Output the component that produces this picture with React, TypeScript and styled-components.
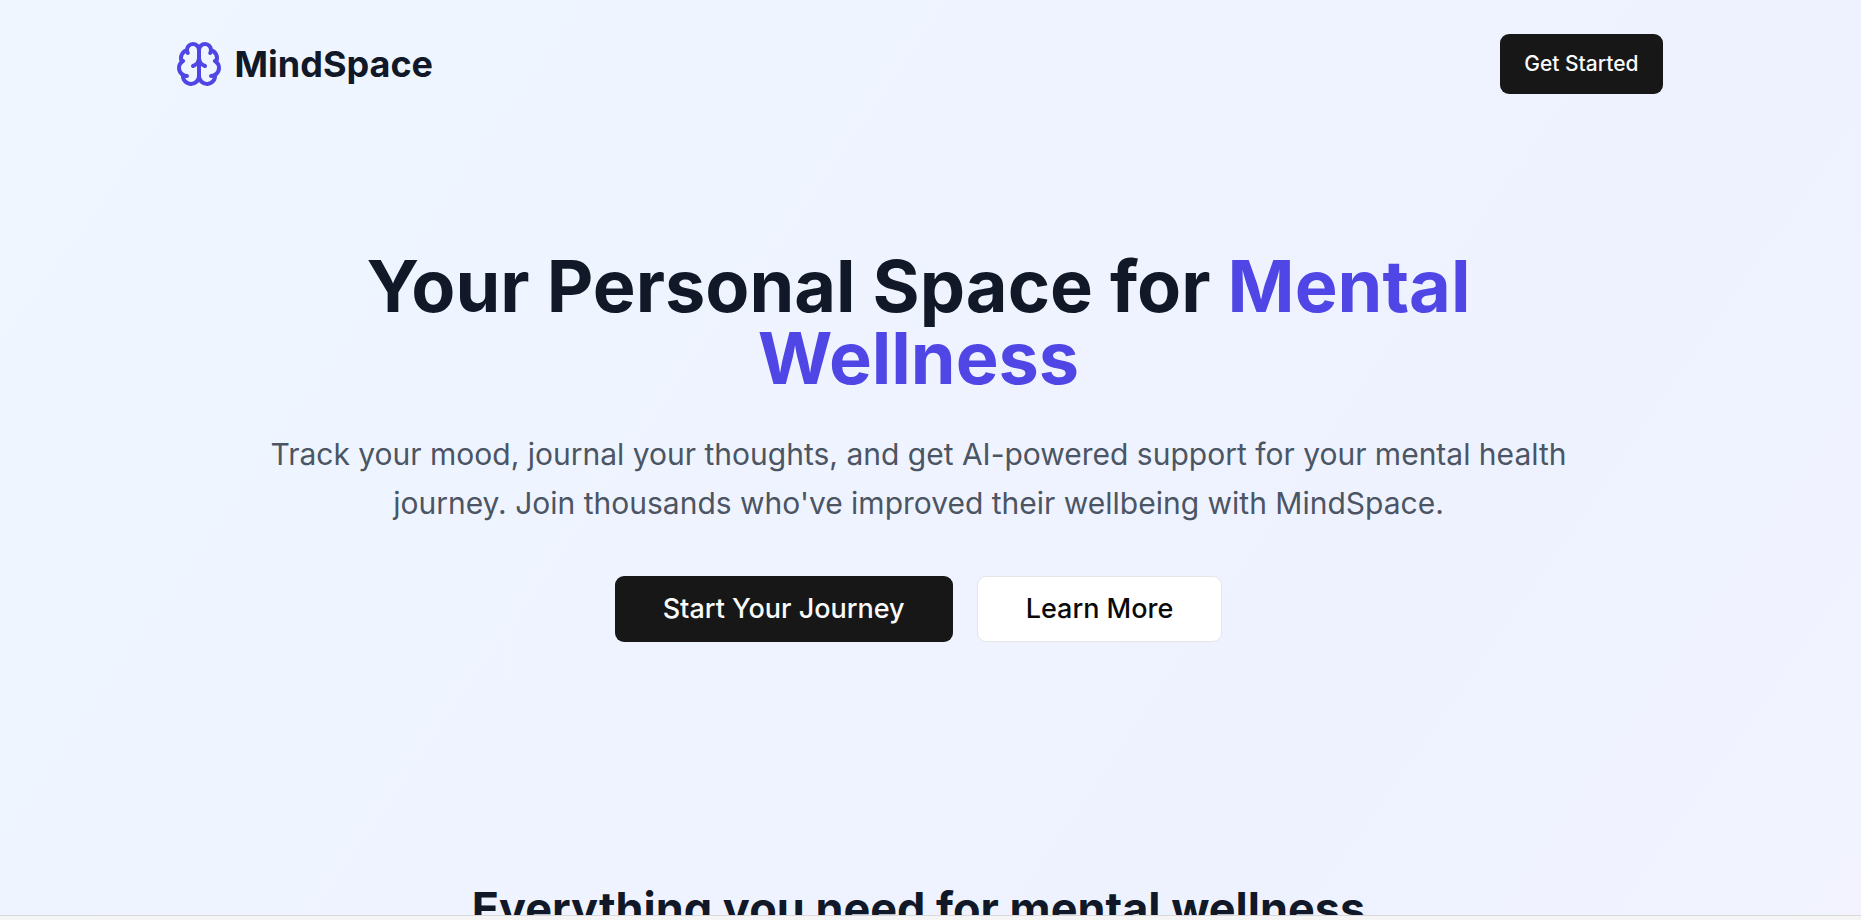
import React from 'react';
import styled, { createGlobalStyle, css } from 'styled-components';

const GlobalStyle = createGlobalStyle`
  *, *::before, *::after { box-sizing: border-box; }
  html, body, #root { height: 100%; }
  body {
    margin: 0;
    overflow: hidden;
    font-family: Inter, "Liberation Sans", sans-serif;
    color: #111827;
  }
  h1, h2, p { margin: 0; }
`;

const Shell = styled.div`
  display: flex;
  flex-direction: column;
  height: 100vh;
`;

const Page = styled.div`
  flex: 1;
  min-height: 0;
  overflow: hidden;
  padding-right: 24px;
  background: linear-gradient(to bottom right, #eff6ff, #eef2ff, #faf5ff) 0 0 / 100% 2700px no-repeat;
`;

const Container = styled.div`
  max-width: 1536px;
  margin: 0 auto;
  padding: 0 24px;
`;

const Header = styled.header`
  display: flex;
  align-items: center;
  justify-content: space-between;
  padding: 34px 0;
`;

const Brand = styled.a`
  display: flex;
  align-items: center;
  gap: 12px;
  color: inherit;
  font-size: 36px;
  line-height: 48px;
  font-weight: 700;
  text-decoration: none;
`;

const BrandIcon = styled.svg`
  width: 48px;
  height: 48px;
  color: #4f46e5;
`;

const Button = styled.button<{ $large?: boolean; $outline?: boolean }>`
  height: 60px;
  padding: 0 24px;
  border: 0;
  border-radius: 9px;
  background: #171717;
  color: #fafafa;
  font-family: inherit;
  font-size: 21px;
  line-height: 30px;
  font-weight: 500;
  cursor: pointer;
  ${({ $large }) => $large && css`
    height: 66px;
    padding: 0 48px;
    font-size: 27px;
    line-height: 42px;
  `}
  ${({ $outline }) => $outline && css`
    border: 1px solid #e5e5e5;
    background: #fff;
    color: #0a0a0a;
  `}
`;

const Hero = styled.section`
  padding: 122px 72px 240px;
  text-align: center;
`;

const Title = styled.h1`
  max-width: 1344px;
  margin: 0 auto;
  font-size: 72px;
  line-height: 72px;
  font-weight: 700;
`;

const Accent = styled.span`
  color: #4f46e5;
`;

const Lead = styled.p`
  max-width: 1344px;
  margin: 36px auto 48px;
  color: #4b5563;
  font-size: 30px;
  line-height: 49px;
`;

const Actions = styled.div`
  display: flex;
  justify-content: center;
  gap: 24px;
`;

const SectionTitle = styled.h2`
  font-size: 45px;
  line-height: 54px;
  font-weight: 700;
  text-align: center;
`;

const BottomEdge = styled.div`
  height: 5px;
  border-top: 1px solid #d9d9dc;
  background: #f5f5f5;
`;

export default function App() {
  return (
    <Shell>
      <GlobalStyle />
      <Page>
        <Container>
          <Header>
            <Brand href="#">
              <BrandIcon viewBox="0 0 24 24" fill="none" stroke="currentColor" strokeWidth="2" strokeLinecap="round" strokeLinejoin="round" aria-hidden="true">
                <path d="M12 5a3 3 0 1 0-5.997.125 4 4 0 0 0-2.526 5.77 4 4 0 0 0 .556 6.588A4 4 0 1 0 12 18Z" />
                <path d="M12 5a3 3 0 1 1 5.997.125 4 4 0 0 1 2.526 5.77 4 4 0 0 1-.556 6.588A4 4 0 1 1 12 18Z" />
                <path d="M15 13a4.5 4.5 0 0 1-3-4 4.5 4.5 0 0 1-3 4" />
                <path d="M17.599 6.5a3 3 0 0 0 .399-1.375" />
                <path d="M6.003 5.125A3 3 0 0 0 6.401 6.5" />
                <path d="M3.477 10.896a4 4 0 0 1 .585-.396" />
                <path d="M19.938 10.5a4 4 0 0 1 .585.396" />
                <path d="M6 18a4 4 0 0 1-1.967-.516" />
                <path d="M19.967 17.484A4 4 0 0 1 18 18" />
              </BrandIcon>
              MindSpace
            </Brand>
            <Button type="button">Get Started</Button>
          </Header>
          <main>
            <Hero>
              <Title>
                Your Personal Space for <Accent>Mental Wellness</Accent>
              </Title>
              <Lead>
                Track your mood, journal your thoughts, and get AI-powered support for your mental health journey.
                Join thousands who've improved their wellbeing with MindSpace.
              </Lead>
              <Actions>
                <Button type="button" $large>Start Your Journey</Button>
                <Button type="button" $large $outline>Learn More</Button>
              </Actions>
            </Hero>
            <SectionTitle>Everything you need for mental wellness</SectionTitle>
          </main>
        </Container>
      </Page>
      <BottomEdge />
    </Shell>
  );
}
